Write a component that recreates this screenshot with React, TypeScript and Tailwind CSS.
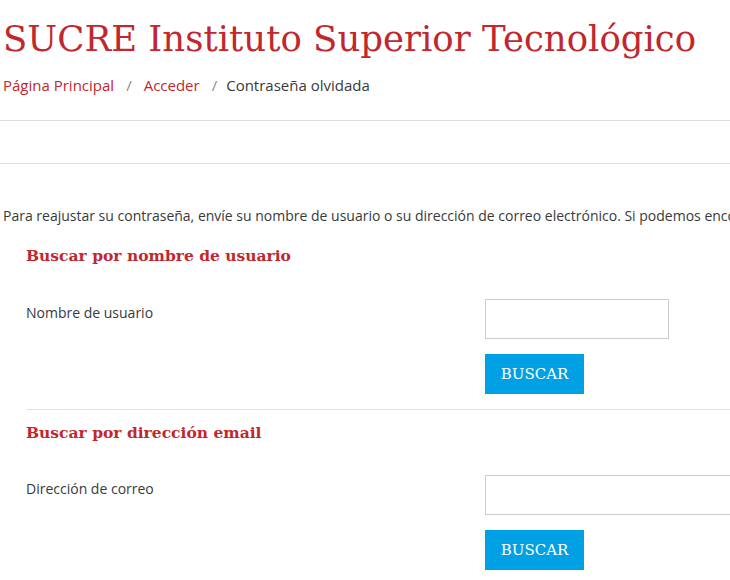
const slab = "font-['DejaVu_Serif',serif]";
const body = "font-['Open_Sans',sans-serif]";

function SearchSection({
  title,
  label,
  inputClass,
  border,
}: {
  title: string;
  label: string;
  inputClass: string;
  border?: boolean;
}) {
  return (
    <section className={border ? "ml-[26px] border-t border-[#e2e2e2]" : "ml-[26px]"}>
      <h3 className={`${slab} pt-[12px] text-[15.5px] font-bold leading-[22px] text-[#c1272d]`}>{title}</h3>
      <div className={border ? "mt-[31px] flex" : "mt-[32px] flex"}>
        <label className="w-[459px] shrink-0 pt-[4px] text-[14px] leading-[20px] text-[#373a3c]">{label}</label>
        <div className="flex shrink-0 flex-col">
          <input className={`h-[40px] border border-[#cccccc] bg-white ${inputClass}`} />
          <button className={`${slab} mt-[15px] h-[40px] w-[99px] bg-[#00a1e4] text-[15px] text-white`}>
            BUSCAR
          </button>
        </div>
      </div>
    </section>
  );
}

export default function App() {
  return (
    <div className={`${body} h-[580px] w-[730px] overflow-hidden bg-white`}>
      <header className="pl-[3px] pt-[16px]">
        <h1 className={`${slab} whitespace-nowrap text-[35.5px] leading-[46px] text-[#c1272d]`}>
          SUCRE Instituto Superior Tecnológico
        </h1>
        <nav className="mt-[13px] flex items-center text-[15px] leading-[20px]">
          <span className="text-[#c1272d]">Página Principal</span>
          <span className="mx-[12px] text-[#888]">/</span>
          <span className="text-[#c1272d]">Acceder</span>
          <span className="ml-[12px] mr-[9px] text-[#888]">/</span>
          <span className="text-[#373a3c]">Contraseña olvidada</span>
        </nav>
      </header>
      <div className="mt-[25px] h-[44px] border-y border-[#dedede]" />
      <p className="mt-[42px] whitespace-nowrap pl-[3px] text-[14px] leading-[20px] text-[#373a3c]">
        Para reajustar su contraseña, envíe su nombre de usuario o su dirección de correo electrónico. Si podemos encontrarle en la base de datos, le enviaremos un email con instrucciones para poder acceder de nuevo.
      </p>
      <div className="pt-[7px]">
        <SearchSection title="Buscar por nombre de usuario" label="Nombre de usuario" inputClass="w-[184px]" />
      </div>
      <div className="h-[15px]" />
      <SearchSection
        title="Buscar por dirección email"
        label="Dirección de correo"
        inputClass="w-[300px]"
        border
      />
    </div>
  );
}
